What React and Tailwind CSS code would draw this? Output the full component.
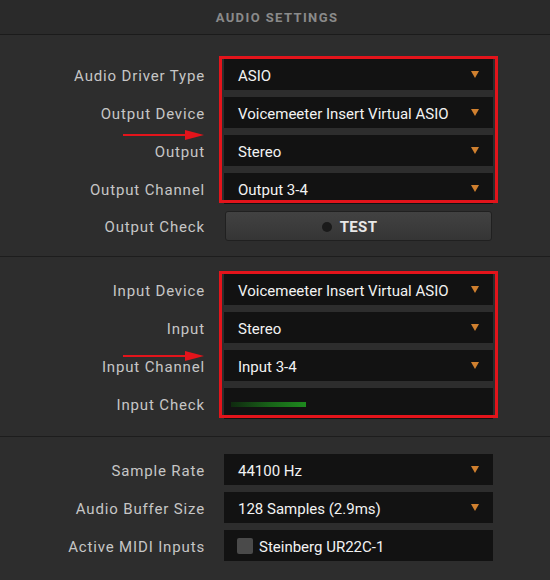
import React from "react";

function Caret() {
  return (
    <svg width="8" height="7" viewBox="0 0 8 7" className="shrink-0">
      <path d="M0 0 H8 L4 7 Z" fill="#d0802f" />
    </svg>
  );
}

function Label({ children }) {
  return (
    <div className="text-right text-[15px] tracking-[0.85px] text-[#c6c6c6] leading-none pt-[3px]">
      {children}
    </div>
  );
}

function Dropdown({ value }) {
  return (
    <div className="h-[31px] bg-[#121212] flex items-center justify-between pl-[14px] pr-[14px]">
      <span className="text-[15px] text-[#f2f2f2] leading-none pt-[3px]">{value}</span>
      <Caret />
    </div>
  );
}

function Row({ label, children }) {
  return (
    <div className="grid grid-cols-[205px_269px] gap-x-[19px] items-center">
      <Label>{label}</Label>
      {children}
    </div>
  );
}

function RedBox({ className }) {
  return (
    <div
      className={
        "absolute left-[219px] w-[279px] h-[147px] border-[3px] border-[#e3141b] pointer-events-none " +
        className
      }
    />
  );
}

function Arrow({ className }) {
  return (
    <svg
      width="82"
      height="12"
      viewBox="0 0 82 12"
      className={"absolute left-[123px] " + className}
    >
      <line x1="0" y1="6" x2="66" y2="6" stroke="#e3141b" strokeWidth="2" />
      <path d="M62 1 L81 6 L62 11 Z" fill="#e3141b" />
    </svg>
  );
}

export default function App() {
  return (
    <div className="w-[550px] h-[580px] bg-[#2d2d2d] font-['Roboto',sans-serif] overflow-hidden">
      <div className="h-[35px] bg-[#2a2a2a] border-b border-[#1b1b1b] flex items-center justify-center">
        <span className="text-[13px] font-bold tracking-[1.4px] text-[#8a8a8a] ml-[4px] pt-[1px]">
          AUDIO SETTINGS
        </span>
      </div>

      <div className="relative pt-[24px] pb-[15px] border-b border-[#1d1d1d] flex flex-col gap-[7px]">
        <Row label="Audio Driver Type">
          <Dropdown value="ASIO" />
        </Row>
        <Row label="Output Device">
          <Dropdown value="Voicemeeter Insert Virtual ASIO" />
        </Row>
        <Row label="Output">
          <Dropdown value="Stereo" />
        </Row>
        <Row label="Output Channel">
          <Dropdown value="Output 3-4" />
        </Row>
        <Row label="Output Check">
          <div className="h-[30px] ml-[1px] mr-[1px] rounded-[3px] border border-[#202020] bg-gradient-to-b from-[#424242] to-[#353535] flex items-center justify-center">
            <span className="relative text-[15px] font-bold text-[#e8e8e8] leading-none tracking-[0.3px] pt-[2px]">
              <span className="absolute left-[-18px] top-[4px] w-[10px] h-[10px] rounded-full bg-[#1a1a1a]" />
              TEST
            </span>
          </div>
        </Row>
        <RedBox className="top-[21px]" />
        <Arrow className="top-[94px]" />
      </div>

      <div className="relative pt-[17px] pb-[17px] border-b border-[#1d1d1d] flex flex-col gap-[7px]">
        <Row label="Input Device">
          <Dropdown value="Voicemeeter Insert Virtual ASIO" />
        </Row>
        <Row label="Input">
          <Dropdown value="Stereo" />
        </Row>
        <Row label="Input Channel">
          <Dropdown value="Input 3-4" />
        </Row>
        <Row label="Input Check">
          <div className="h-[31px] bg-[#121212] flex items-center pl-[7px]">
            <div className="w-[75px] h-[5px] mt-[1px] bg-gradient-to-r from-[#0f2a0f] via-[#176117] to-[#1e8a1e]" />
          </div>
        </Row>
        <RedBox className="top-[14px]" />
        <Arrow className="top-[93px]" />
      </div>

      <div className="pt-[17px] flex flex-col gap-[7px]">
        <Row label="Sample Rate">
          <Dropdown value="44100 Hz" />
        </Row>
        <Row label="Audio Buffer Size">
          <Dropdown value="128 Samples (2.9ms)" />
        </Row>
        <Row label="Active MIDI Inputs">
          <div className="h-[31px] bg-[#121212] flex items-center pl-[13px] gap-[6px]">
            <div className="w-[16px] h-[16px] rounded-[2px] bg-[#4a4a4a]" />
            <span className="text-[15px] text-[#f2f2f2] leading-none pt-[3px]">
              Steinberg UR22C-1
            </span>
          </div>
        </Row>
      </div>
    </div>
  );
}
